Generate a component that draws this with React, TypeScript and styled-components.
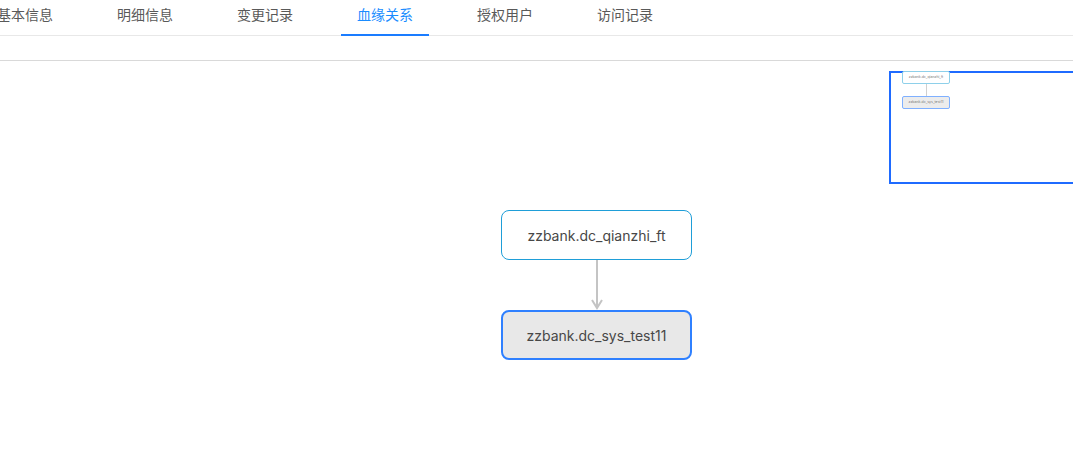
import React from "react";
import styled, { createGlobalStyle } from "styled-components";

const Global = createGlobalStyle`
  html, body { margin: 0; padding: 0; background: #fff; }
  body { font-family: "Noto Sans CJK SC", "Noto Sans", sans-serif; overflow: hidden; }
  #root { width: 1073px; height: 463px; }
`;

const Page = styled.div`
  width: 1073px;
  height: 463px;
  display: flex;
  flex-direction: column;
  overflow: hidden;
  background: #fff;
`;

const TabBar = styled.nav`
  height: 36px;
  box-sizing: border-box;
  border-bottom: 1px solid #e8e8e8;
  display: flex;
  gap: 32px;
  margin-left: -19px;
  flex-shrink: 0;
`;

const Tab = styled.div<{ $active?: boolean }>`
  position: relative;
  width: 88px;
  box-sizing: border-box;
  text-align: center;
  padding-top: 3px;
  font-size: 14px;
  line-height: 22px;
  color: ${(p) => (p.$active ? "#1a8cff" : "#595959")};
  &::after {
    content: "";
    display: ${(p) => (p.$active ? "block" : "none")};
    position: absolute;
    left: 0;
    right: 0;
    bottom: -1px;
    height: 2px;
    background: #1a7cff;
  }
`;

const Strip = styled.div`
  height: 25px;
  box-sizing: border-box;
  border-bottom: 1px solid #d9d9d9;
  flex-shrink: 0;
`;

const Canvas = styled.div`
  position: relative;
  flex: 1;
  overflow: hidden;
`;

/* the lineage graph: its place on the canvas is the content itself */
const Graph = styled.div`
  position: absolute;
  left: 501px;
  top: 149px;
  display: flex;
  flex-direction: column;
  align-items: center;
`;

const Node = styled.div<{ $selected?: boolean }>`
  width: 191px;
  height: 50px;
  box-sizing: border-box;
  border-radius: 8px;
  display: flex;
  align-items: center;
  justify-content: center;
  font-family: Inter, "Liberation Sans", sans-serif;
  font-size: 14px;
  color: #474747;
  background: ${(p) => (p.$selected ? "#e8e8e8" : "#ffffff")};
  border: ${(p) => (p.$selected ? "2px solid #2f80ff" : "1px solid #1f9ed8")};
`;

const Edge = styled.svg`
  display: block;
  width: 20px;
  height: 50px;
`;

/* minimap overlay in the top right corner of the canvas */
const MiniMap = styled.div`
  position: absolute;
  left: 889px;
  top: 10px;
  width: 200px;
  height: 113px;
  box-sizing: border-box;
  border: 2px solid #1f6bff;
  background: #fff;
`;

const MiniGraph = styled.div`
  margin: -2px 0 0 11px;
  width: 48px;
  display: flex;
  flex-direction: column;
  align-items: center;
`;

const MiniNode = styled.div<{ $selected?: boolean }>`
  width: 48px;
  height: 12.5px;
  box-sizing: border-box;
  border-radius: 2px;
  display: flex;
  align-items: center;
  justify-content: center;
  font-family: Inter, "Liberation Sans", sans-serif;
  font-size: 3.5px;
  color: #777;
  background: ${(p) => (p.$selected ? "#ececec" : "#fff")};
  border: ${(p) => (p.$selected ? "1px solid #7fb0ff" : "0.5px solid #8ed0ea")};
`;

const MiniEdge = styled.div`
  width: 1px;
  height: 12.5px;
  background: #d0d0d0;
`;

const tabs = ["基本信息", "明细信息", "变更记录", "血缘关系", "授权用户", "访问记录"];

export default function App() {
  return (
    <Page>
      <Global />
      <TabBar>
        {tabs.map((t) => (
          <Tab key={t} $active={t === "血缘关系"}>
            {t}
          </Tab>
        ))}
      </TabBar>
      <Strip />
      <Canvas>
        <Graph>
          <Node>zzbank.dc_qianzhi_ft</Node>
          <Edge viewBox="0 0 20 50">
            <line x1="10" y1="0" x2="10" y2="48" stroke="#c4c4c4" strokeWidth="2" />
            <polyline points="5,40 10,48 15,40" fill="none" stroke="#c4c4c4" strokeWidth="2" />
          </Edge>
          <Node $selected>zzbank.dc_sys_test11</Node>
        </Graph>
        <MiniMap>
          <MiniGraph>
            <MiniNode>zzbank.dc_qianzhi_ft</MiniNode>
            <MiniEdge />
            <MiniNode $selected>zzbank.dc_sys_test11</MiniNode>
          </MiniGraph>
        </MiniMap>
      </Canvas>
    </Page>
  );
}
